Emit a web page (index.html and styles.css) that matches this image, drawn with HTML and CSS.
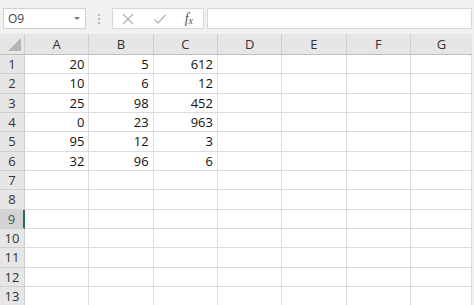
FILE: index.html
```html
<!DOCTYPE html>
<html>
<head>
<meta charset="utf-8">
<link rel="stylesheet" href="styles.css">
</head>
<body>
<div class="app">
  <div class="fbar">
    <div class="namebox"><span class="ref">O9</span><span class="caret"></span></div>
    <div class="grip"><i></i><i></i><i></i></div>
    <div class="tools">
      <svg class="ico" width="14" height="14" viewBox="0 0 14 14"><path d="M2 2 L12 12 M12 2 L2 12" stroke="#b4b4b4" stroke-width="1.3" fill="none"/></svg>
      <svg class="ico" width="14" height="14" viewBox="0 0 14 14"><path d="M1.5 7.5 L5 11 L12.5 3" stroke="#b4b4b4" stroke-width="1.3" fill="none"/></svg>
      <span class="fx">f<sub>x</sub></span>
    </div>
    <div class="input"></div>
  </div>
  <div class="sheet">
    <div class="corner"><span class="tri"></span></div>
    <div class="ch">A</div><div class="ch">B</div><div class="ch">C</div><div class="ch">D</div><div class="ch">E</div><div class="ch">F</div><div class="ch last">G</div>

    <div class="rh">1</div><div class="c">20</div><div class="c">5</div><div class="c">612</div><div class="c"></div><div class="c"></div><div class="c"></div><div class="c"></div>
    <div class="rh">2</div><div class="c">10</div><div class="c">6</div><div class="c">12</div><div class="c"></div><div class="c"></div><div class="c"></div><div class="c"></div>
    <div class="rh">3</div><div class="c">25</div><div class="c">98</div><div class="c">452</div><div class="c"></div><div class="c"></div><div class="c"></div><div class="c"></div>
    <div class="rh">4</div><div class="c">0</div><div class="c">23</div><div class="c">963</div><div class="c"></div><div class="c"></div><div class="c"></div><div class="c"></div>
    <div class="rh">5</div><div class="c">95</div><div class="c">12</div><div class="c">3</div><div class="c"></div><div class="c"></div><div class="c"></div><div class="c"></div>
    <div class="rh">6</div><div class="c">32</div><div class="c">96</div><div class="c">6</div><div class="c"></div><div class="c"></div><div class="c"></div><div class="c"></div>
    <div class="rh">7</div><div class="c"></div><div class="c"></div><div class="c"></div><div class="c"></div><div class="c"></div><div class="c"></div><div class="c"></div>
    <div class="rh">8</div><div class="c"></div><div class="c"></div><div class="c"></div><div class="c"></div><div class="c"></div><div class="c"></div><div class="c"></div>
    <div class="rh sel">9</div><div class="c"></div><div class="c"></div><div class="c"></div><div class="c"></div><div class="c"></div><div class="c"></div><div class="c"></div>
    <div class="rh">10</div><div class="c"></div><div class="c"></div><div class="c"></div><div class="c"></div><div class="c"></div><div class="c"></div><div class="c"></div>
    <div class="rh">11</div><div class="c"></div><div class="c"></div><div class="c"></div><div class="c"></div><div class="c"></div><div class="c"></div><div class="c"></div>
    <div class="rh">12</div><div class="c"></div><div class="c"></div><div class="c"></div><div class="c"></div><div class="c"></div><div class="c"></div><div class="c"></div>
    <div class="rh">13</div><div class="c"></div><div class="c"></div><div class="c"></div><div class="c"></div><div class="c"></div><div class="c"></div><div class="c"></div>
  </div>
</div>
</body>
</html>
```
FILE: styles.css
```css
html, body {
  margin: 0;
  padding: 0;
  background: #ffffff;
  overflow: hidden;
}
.app {
  width: 474px;
  height: 305px;
  background: #f1f1f1;
  font-family: "Open Sans", "Liberation Sans", sans-serif;
  overflow: hidden;
}
.fbar {
  display: flex;
  align-items: stretch;
  height: 21px;
  padding: 8px 2px 0 3px;
  margin-bottom: 5px;
}
.namebox {
  width: 83px;
  box-sizing: border-box;
  background: #fff;
  border: 1px solid #d2d2d2;
  display: flex;
  align-items: center;
  justify-content: space-between;
  padding: 0 5px 0 4px;
}
.ref {
  font-size: 12px;
  color: #444;
}
.caret {
  width: 0;
  height: 0;
  border-left: 3px solid transparent;
  border-right: 3px solid transparent;
  border-top: 3px solid #777;
}
.grip {
  width: 26px;
  display: flex;
  flex-direction: column;
  align-items: center;
  justify-content: center;
  gap: 2px;
}
.grip i {
  width: 2px;
  height: 2px;
  background: #b8b8b8;
  display: block;
}
.tools {
  width: 92px;
  box-sizing: border-box;
  background: #fff;
  border: 1px solid #d8d8d8;
  display: flex;
  align-items: center;
  padding: 0 10px 0 8px;
  justify-content: space-between;
}
.ico { display: block; }
.fx {
  font-family: "Liberation Serif", serif;
  font-style: italic;
  font-size: 14px;
  color: #555;
  line-height: 1;
}
.fx sub { font-size: 10px; vertical-align: -1px; }
.input {
  flex: 1;
  margin-left: 3px;
  background: #fff;
  border: 1px solid #d8d8d8;
  box-sizing: border-box;
}
.sheet {
  display: grid;
  grid-template-columns: 25px repeat(6, 64.33px) 1fr;
  grid-template-rows: 21px;
  grid-auto-rows: 19.33px;
  background: #fff;
  margin-right: 2px;
}
.corner {
  background: #e6e6e6;
  border-right: 1px solid #d0d0d0;
  border-bottom: 1px solid #bdbdbd;
  box-sizing: border-box;
  position: relative;
}
.tri {
  position: absolute;
  right: 3px;
  bottom: 3px;
  width: 0;
  height: 0;
  border-left: 13px solid transparent;
  border-bottom: 13px solid #b5b5b5;
}
.ch {
  background: #e6e6e6;
  border-right: 1px solid #d0d0d0;
  border-bottom: 1px solid #bdbdbd;
  box-sizing: border-box;
  text-align: center;
  font-size: 13px;
  line-height: 20px;
  color: #333;
}
.ch.last { border-right: none; }
.rh {
  background: #e6e6e6;
  border-right: 1px solid #cfcfcf;
  border-bottom: 1px solid #d0d0d0;
  box-sizing: border-box;
  text-align: center;
  font-size: 13px;
  line-height: 18px;
  color: #333;
}
.rh.sel {
  background: #d3d3d3;
  border-right: 2px solid #217346;
  color: #3f5f4d;
}
.c {
  border-right: 1px solid #dcdcdc;
  border-bottom: 1px solid #dcdcdc;
  box-sizing: border-box;
  text-align: right;
  padding-right: 4px;
  font-size: 13px;
  line-height: 18px;
  color: #111;
}
```
